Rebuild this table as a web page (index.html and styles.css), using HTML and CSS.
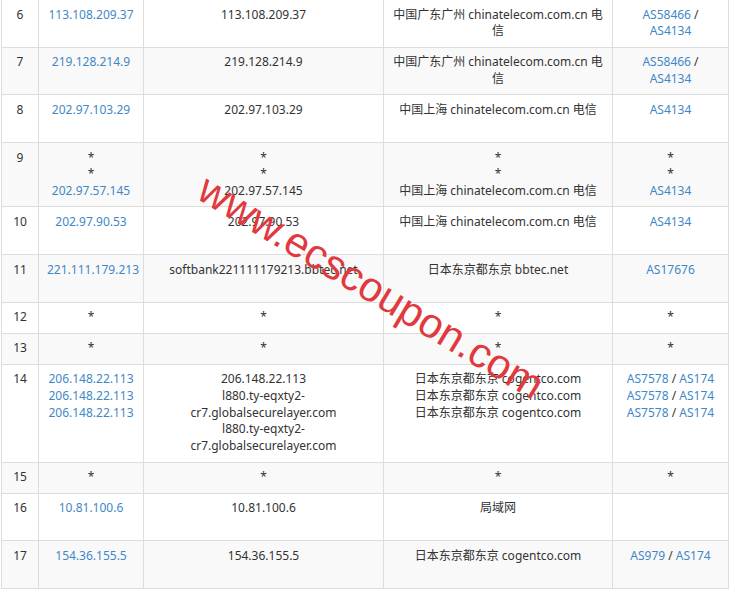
FILE: index.html
```html
<!doctype html>
<html>
    <head>
        <meta charset="utf-8">
        <title>Traceroute</title>
        <link rel="stylesheet" href="styles.css">
    </head>
    <body>
        <div class="page">
            <table class="trace">
                <colgroup>
                    <col class="c-hop">
                    <col class="c-ip">
                    <col class="c-host">
                    <col class="c-geo">
                    <col class="c-as">
                </colgroup>
                <tbody>
                    <tr class="two">
                        <td>6</td>
                        <td><a href="#">113.108.209.37</a></td>
                        <td>113.108.209.37</td>
                        <td>中国广东广州 chinatelecom.com.cn 电信</td>
                        <td><a href="#">AS58466</a> / <a href="#">AS4134</a></td>
                    </tr>
                    <tr class="two">
                        <td>7</td>
                        <td><a href="#">219.128.214.9</a></td>
                        <td>219.128.214.9</td>
                        <td>中国广东广州 chinatelecom.com.cn 电信</td>
                        <td><a href="#">AS58466</a> / <a href="#">AS4134</a></td>
                    </tr>
                    <tr class="two">
                        <td>8</td>
                        <td><a href="#">202.97.103.29</a></td>
                        <td>202.97.103.29</td>
                        <td>中国上海 chinatelecom.com.cn 电信</td>
                        <td><a href="#">AS4134</a></td>
                    </tr>
                    <tr>
                        <td>9</td>
                        <td>*<br>*<br><a href="#">202.97.57.145</a></td>
                        <td>*<br>*<br>202.97.57.145</td>
                        <td>*<br>*<br>中国上海 chinatelecom.com.cn 电信</td>
                        <td>*<br>*<br><a href="#">AS4134</a></td>
                    </tr>
                    <tr class="two">
                        <td>10</td>
                        <td><a href="#">202.97.90.53</a></td>
                        <td>202.97.90.53</td>
                        <td>中国上海 chinatelecom.com.cn 电信</td>
                        <td><a href="#">AS4134</a></td>
                    </tr>
                    <tr class="two">
                        <td>11</td>
                        <td><a href="#">221.111.179.213</a></td>
                        <td>softbank221111179213.bbtec.net</td>
                        <td>日本东京都东京 bbtec.net</td>
                        <td><a href="#">AS17676</a></td>
                    </tr>
                    <tr>
                        <td>12</td>
                        <td>*</td>
                        <td>*</td>
                        <td>*</td>
                        <td>*</td>
                    </tr>
                    <tr>
                        <td>13</td>
                        <td>*</td>
                        <td>*</td>
                        <td>*</td>
                        <td>*</td>
                    </tr>
                    <tr>
                        <td>14</td>
                        <td><a href="#">206.148.22.113</a><br><a href="#">206.148.22.113</a><br><a href="#">206.148.22.113</a></td>
                        <td>206.148.22.113<br>l880.ty-eqxty2-cr7.globalsecurelayer.com<br>l880.ty-eqxty2-cr7.globalsecurelayer.com</td>
                        <td>日本东京都东京 cogentco.com<br>日本东京都东京 cogentco.com<br>日本东京都东京 cogentco.com</td>
                        <td><a href="#">AS7578</a> / <a href="#">AS174</a><br><a href="#">AS7578</a> / <a href="#">AS174</a><br><a href="#">AS7578</a> / <a href="#">AS174</a></td>
                    </tr>
                    <tr>
                        <td>15</td>
                        <td>*</td>
                        <td>*</td>
                        <td>*</td>
                        <td>*</td>
                    </tr>
                    <tr class="two">
                        <td>16</td>
                        <td><a href="#">10.81.100.6</a></td>
                        <td>10.81.100.6</td>
                        <td>局域网</td>
                        <td></td>
                    </tr>
                    <tr class="two">
                        <td>17</td>
                        <td><a href="#">154.36.155.5</a></td>
                        <td>154.36.155.5</td>
                        <td>日本东京都东京 cogentco.com</td>
                        <td><a href="#">AS979</a> / <a href="#">AS174</a></td>
                    </tr>
                </tbody>
            </table>

            <!-- watermark -->
            <div class="watermark">www.ecscoupon.com</div>
        </div>
    </body>
</html>
```

FILE: styles.css
```css
body {
    margin: 0;
    background-color: #fff;
    font-family: "Noto Sans", "Noto Sans CJK SC", sans-serif;
    font-size: 12px;
    line-height: 16.7px;
    color: #333;
}

.page {
    position: relative;
    overflow: hidden;
    height: 590px;
}

.trace {
    border-collapse: collapse;
    table-layout: fixed;
    width: 728px;
    margin: -1px 0 0 1px;
}

.c-hop { width: 37px; }
.c-ip { width: 105px; }
.c-host { width: 240px; }
.c-geo { width: 229px; }
.c-as { width: 116px; }

.trace td {
    border: 1px solid #ddd;
    padding: 6.6px 8px 6.7px;
    text-align: center;
    vertical-align: top;
}

.trace tr:nth-child(even) td {
    background-color: #f9f9f9;
}

.trace tr.two td {
    height: 33.4px;
}

.trace a {
    color: #3f88c8;
    text-decoration: none;
}

.watermark {
    position: absolute;
    left: 371px;
    top: 287px;
    transform: translate(-50%, -50%) rotate(31deg);
    font-family: "Liberation Sans", Arial, sans-serif;
    font-size: 42px;
    line-height: 1;
    color: #e03a3e;
    white-space: nowrap;
}
```
